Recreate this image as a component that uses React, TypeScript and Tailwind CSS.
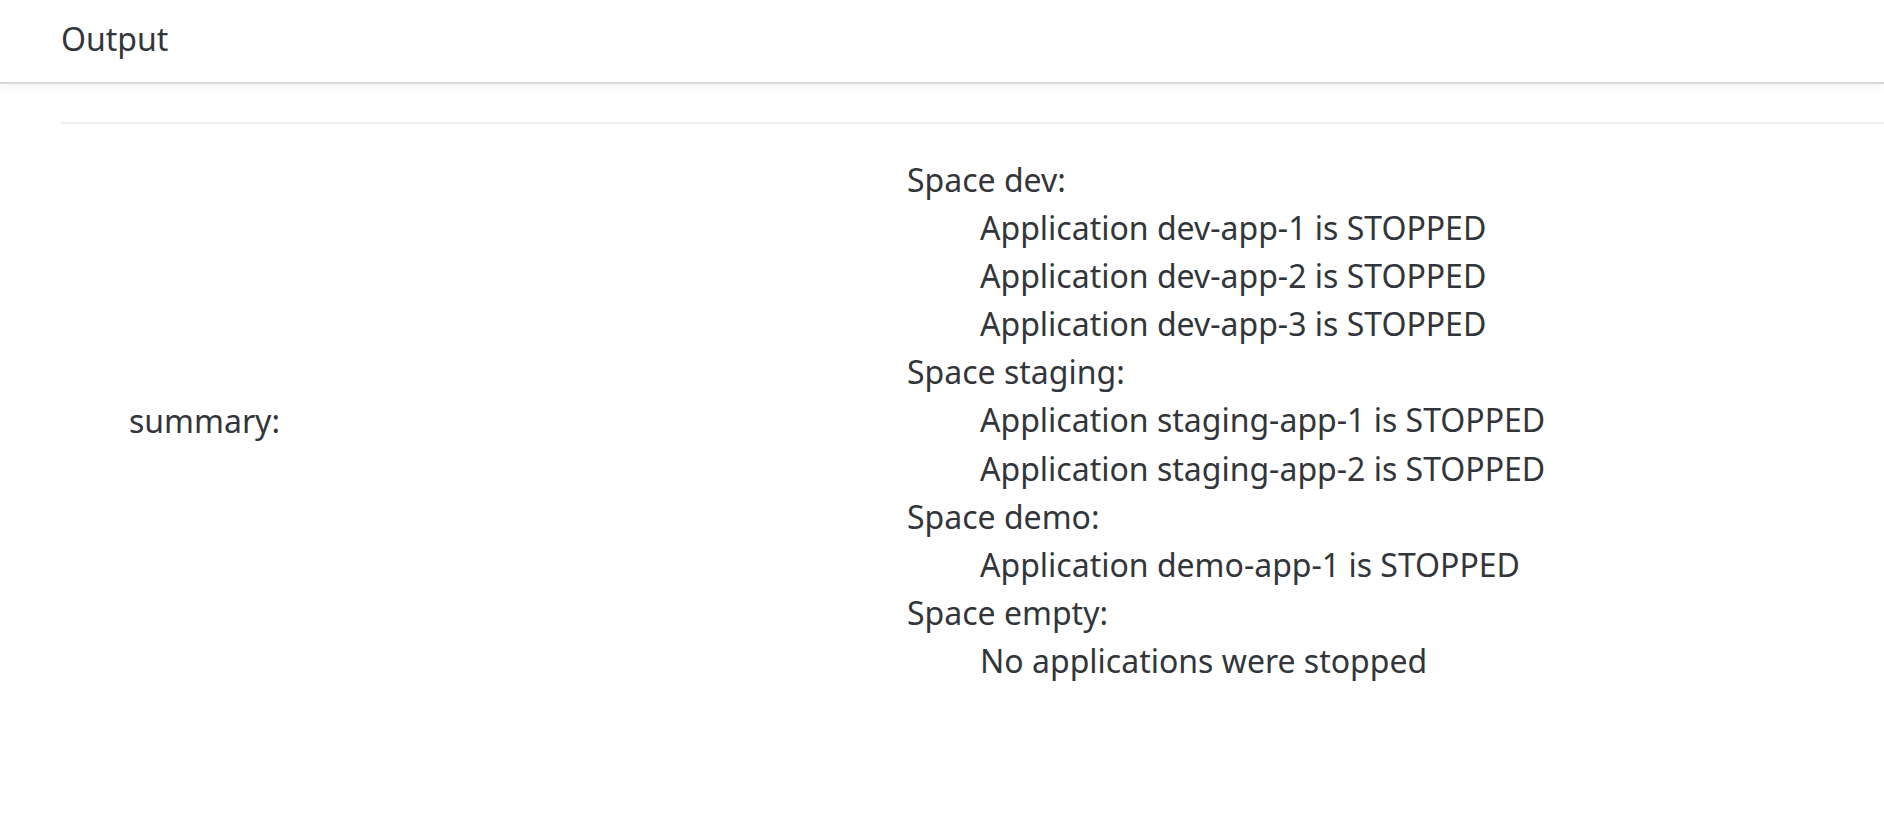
import React from 'react';

const spaces = [
  {
    name: 'dev',
    lines: [
      'Application dev-app-1 is STOPPED',
      'Application dev-app-2 is STOPPED',
      'Application dev-app-3 is STOPPED',
    ],
  },
  {
    name: 'staging',
    lines: [
      'Application staging-app-1 is STOPPED',
      'Application staging-app-2 is STOPPED',
    ],
  },
  { name: 'demo', lines: ['Application demo-app-1 is STOPPED'] },
  { name: 'empty', lines: ['No applications were stopped'] },
];

const App = () => {
  return (
    <div
      className="min-h-screen bg-white text-[#32363a]"
      style={{ fontFamily: '"Noto Sans", "Open Sans", sans-serif' }}
    >
      <div className="h-[84px] border-b-2 border-[#d9d9d9] shadow-[0_4px_8px_rgba(0,0,0,0.04)] flex items-center pl-[61px] pb-[4px]">
        <h1 className="text-[32px] leading-none">Output</h1>
      </div>
      <div className="pl-[61px] pt-[38px]">
        <div className="border-t-2 border-[#eeeeee] flex items-center pt-[32px] pb-[30px]">
          <div className="w-[846px] pl-[68px] text-[32px] leading-[48px]">summary:</div>
          <div className="text-[32px] leading-[48.1px]">
            {spaces.map((s) => (
              <div key={s.name}>
                <div>Space {s.name}:</div>
                {s.lines.map((l) => (
                  <div key={l} className="pl-[73px]">
                    {l}
                  </div>
                ))}
              </div>
            ))}
          </div>
        </div>
      </div>
    </div>
  );
};

export default App;
